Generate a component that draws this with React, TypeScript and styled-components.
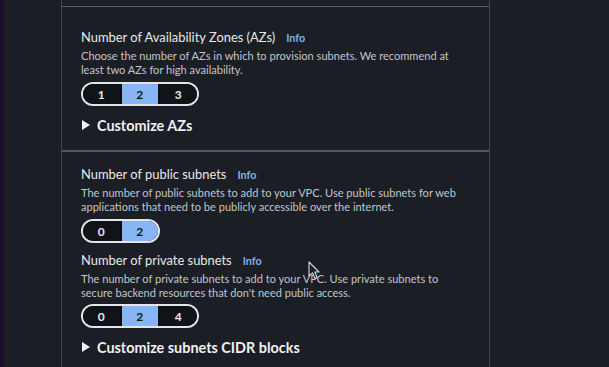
import React from "react";
import styled, { createGlobalStyle } from "styled-components";

const Global = createGlobalStyle`
  html, body { margin: 0; padding: 0; background: #1b1e24; }
  body { font-family: Lato, "Liberation Sans", sans-serif; overflow: hidden; }
`;

const Page = styled.div`
  display: flex;
  width: 609px;
  height: 367px;
  background: #1b1e24;
  position: relative;
  overflow: hidden;
`;

const Strip = styled.div`
  width: 4px;
  background: #1c0f2c;
  flex: none;
`;

const Gutter = styled.div`
  width: 57px;
  flex: none;
`;

const Panel = styled.div`
  width: 427px;
  border-left: 1px solid #41464f;
  border-right: 1px solid #41464f;
  display: flex;
  flex-direction: column;
  flex: none;
`;

const TopCap = styled.div`
  height: 6px;
  border-bottom: 1px solid #5a606a;
`;

const Section = styled.div<{ $top: number; $bottom: number; $divider?: boolean }>`
  padding: ${(p) => p.$top}px 20px ${(p) => p.$bottom}px 19px;
  border-bottom: ${(p) => (p.$divider ? "2px solid #50565f" : "none")};
  display: flex;
  flex-direction: column;
`;

const Field = styled.div<{ $mt?: number }>`
  display: flex;
  flex-direction: column;
  margin-top: ${(p) => p.$mt ?? 0}px;
`;

const LabelRow = styled.div`
  display: flex;
  align-items: baseline;
  gap: 11px;
  height: 18px;
  line-height: 18px;
`;

const Label = styled.span`
  font-size: 12.9px;
  color: #e6e8eb;
  font-weight: 400;
`;

const Info = styled.span`
  font-size: 10.8px;
  font-weight: 700;
  color: #7fb2f0;
`;

const Desc = styled.div`
  margin-top: 3px;
  font-size: 11.05px;
  line-height: 14px;
  color: #c2c5cc;
  width: 385px;
`;

const Seg = styled.div<{ $mt?: number }>`
  margin-top: ${(p) => p.$mt ?? 5}px;
  display: inline-flex;
  align-self: flex-start;
  height: 24px;
  box-sizing: border-box;
  border: 2px solid #e3e5e8;
  border-radius: 12px;
  overflow: hidden;
  background: #101318;
`;

const SegBtn = styled.div<{ $on?: boolean; $first?: boolean }>`
  width: 36.5px;
  display: flex;
  align-items: center;
  justify-content: center;
  font-size: 12px;
  font-weight: 700;
  color: ${(p) => (p.$on ? "#0f141a" : "#e9ebed")};
  background: ${(p) => (p.$on ? "#87b5f6" : "#101318")};
  border-left: ${(p) => (p.$first ? "none" : "2px solid #0c0e12")};
`;

const Expander = styled.div`
  margin-top: 9px;
  display: flex;
  align-items: center;
  height: 20px;
  gap: 7px;
  color: #f0f1f3;
  font-size: 14.4px;
  font-weight: 700;
`;

const Caret = styled.span`
  width: 0;
  height: 0;
  margin-left: 1px;
  border-top: 5px solid transparent;
  border-bottom: 5px solid transparent;
  border-left: 8px solid #f0f1f3;
`;

const Cursor = styled.svg`
  position: absolute;
  left: 308px;
  top: 261px;
`;

type SegProps = { items: string[]; selected: number; mt?: number };
const Segmented = ({ items, selected, mt }: SegProps) => (
  <Seg $mt={mt}>
    {items.map((t, i) => (
      <SegBtn key={t} $on={i === selected} $first={i === 0}>
        {t}
      </SegBtn>
    ))}
  </Seg>
);

export default function App() {
  return (
    <Page>
      <Global />
      <Strip />
      <Gutter />
      <Panel>
        <TopCap />
        <Section $top={21} $bottom={15} $divider>
          <Field>
            <LabelRow>
              <Label>Number of Availability Zones (AZs)</Label>
              <Info>Info</Info>
            </LabelRow>
            <Desc>
              Choose the number of AZs in which to provision subnets. We recommend at least two AZs
              for high availability.
            </Desc>
            <Segmented items={["1", "2", "3"]} selected={1} />
          </Field>
          <Expander>
            <Caret />
            Customize AZs
          </Expander>
        </Section>
        <Section $top={13} $bottom={0}>
          <Field>
            <LabelRow>
              <Label>Number of public subnets</Label>
              <Info>Info</Info>
            </LabelRow>
            <Desc>
              The number of public subnets to add to your VPC. Use public subnets for web
              applications that need to be publicly accessible over the internet.
            </Desc>
            <Segmented items={["0", "2"]} selected={1} />
          </Field>
          <Field $mt={8}>
            <LabelRow>
              <Label>Number of private subnets</Label>
              <Info>Info</Info>
            </LabelRow>
            <Desc>
              The number of private subnets to add to your VPC. Use private subnets to secure
              backend resources that don't need public access.
            </Desc>
            <Segmented items={["0", "2", "4"]} selected={1} mt={4} />
          </Field>
          <Expander>
            <Caret />
            Customize subnets CIDR blocks
          </Expander>
        </Section>
      </Panel>
      <Cursor width="12" height="19" viewBox="0 0 12 19">
        <path
          d="M1 1 L1 15 L4.5 11.8 L7 17.5 L9.2 16.5 L6.8 11 L11 11 Z"
          fill="#1b1e24"
          stroke="#d8dadd"
          strokeWidth="1.1"
          strokeLinejoin="round"
        />
      </Cursor>
    </Page>
  );
}
